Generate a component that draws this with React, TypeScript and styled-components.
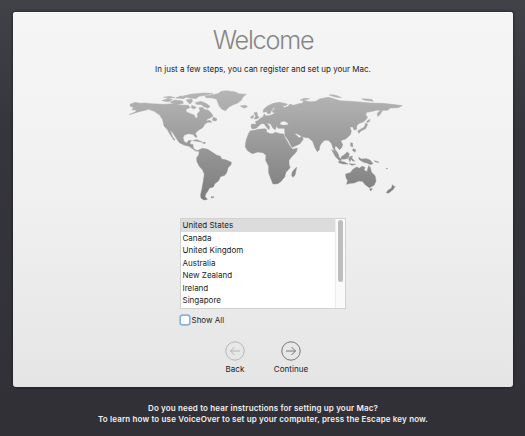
import React from "react";
import styled, { createGlobalStyle } from "styled-components";

const GlobalStyle = createGlobalStyle`
  * { box-sizing: border-box; }
  body { margin: 0; background: #303036; }
`;

const Screen = styled.main`
  width: 525px;
  height: 436px;
  padding: 12px 12px 0 13px;
  overflow: hidden;
  background: linear-gradient(#404247 0%, #35363b 30%, #303036 100%);
  font-family: Inter, "Liberation Sans", sans-serif;
  color: #1c1c1c;
`;

const Panel = styled.section`
  display: flex;
  flex-direction: column;
  align-items: center;
  height: 375px;
  border-radius: 3px;
  background: linear-gradient(#f5f5f5, #f1f1f1 45%, #e5e5e5);
  box-shadow: 0 0 3px #151519, inset 0 1px #ffffff;
`;

const Title = styled.h1`
  margin: 12px 0 0;
  height: 32px;
  font-size: 25.2px;
  line-height: 32px;
  font-weight: 300;
  letter-spacing: -1.2px;
  color: #858585;
`;

const Intro = styled.p`
  margin: 7px 0 0;
  height: 12px;
  font-size: 8px;
  line-height: 12px;
  white-space: nowrap;
`;

const WorldMap = styled.svg`
  display: block;
  flex: none;
  width: 290px;
  height: 125px;
  margin: 5px 0 0 4px;
`;

const Chooser = styled.div`
  width: 166px;
  margin: 13px 1px 0 0;
`;

const CountryList = styled.div`
  display: flex;
  height: 91px;
  border: 1px solid #d2d2d2;
  background: #fff;
`;

const Rows = styled.ul`
  flex: 1;
  margin: 0;
  padding: 0;
  list-style: none;
`;

const Row = styled.li<{ $selected?: boolean }>`
  height: 12.5px;
  padding-left: 2px;
  font-size: 8px;
  line-height: 13px;
  background: ${(p) => (p.$selected ? "#dcdcdc" : "transparent")};
`;

const ScrollTrack = styled.div`
  width: 10px;
  padding: 1px 2px 0;
  border-left: 1px solid #ededed;
  background: #fafafa;
`;

const ScrollThumb = styled.div`
  width: 5px;
  height: 62px;
  border-radius: 3px;
  background: #bdbdbd;
`;

const ShowAll = styled.label`
  display: flex;
  align-items: center;
  gap: 3px;
  height: 12px;
  margin-top: 5px;
  font-size: 8px;
`;

const Box = styled.span`
  width: 8px;
  height: 8px;
  margin-left: 1px;
  border-radius: 1.5px;
  background: #fff;
  box-shadow: 0 0 0 1.7px #86b5df;
`;

const Actions = styled.nav`
  display: flex;
  gap: 16px;
  margin: 15px 0 0;
`;

const Action = styled.button<{ $dim?: boolean }>`
  display: flex;
  flex-direction: column;
  align-items: center;
  width: 40px;
  padding: 0;
  border: 0;
  background: none;
  font: 8.1px/12px Inter, "Liberation Sans", sans-serif;
  color: #1c1c1c;
  svg {
    width: 20px;
    height: 20px;
    margin-bottom: 2px;
    color: ${(p) => (p.$dim ? "#b5b5b5" : "#757575")};
  }
`;

const Hint = styled.footer`
  margin-top: 16px;
  text-align: center;
  font-size: 8px;
  line-height: 11px;
  font-weight: 600;
  letter-spacing: 0.15px;
  color: #f0f0f2;
  white-space: nowrap;
`;

const countries = ["United States", "Canada", "United Kingdom", "Australia", "New Zealand", "Ireland", "Singapore"];

const Arrow = ({ back }: { back?: boolean }) => (
  <svg viewBox="0 0 20 20" fill="none" stroke="currentColor" strokeWidth="1">
    <circle cx="10" cy="10" r="9.2" />
    <path d={back ? "M15 10H5.5M9.5 6L5.5 10L9.5 14" : "M5 10H14.5M10.5 6L14.5 10L10.5 14"} />
  </svg>
);

const lands = [
  // North and Central America
  "M30 73L45 67L60 70L74 69L95 71L130 73L160 71L180 75L205 76L210 83L198 88L199 96L212 101L222 105L227 114L233 113L232 101L240 93L237 83L247 82L255 89L264 90L273 98L279 108L272 113L262 117L258 123L270 121L275 127L263 127L254 133L248 143L235 151L226 160L231 172L226 171L219 163L205 161L193 165L189 174L192 184L200 190L205 182L214 181L209 191L219 194L220 205L230 212L240 209L239 214L227 213L216 205L207 199L192 195L178 188L169 175L157 157L150 151L157 169L165 180L162 181L148 160L143 150L132 138L128 119L119 105L103 94L86 88L70 92L57 95L28 104L47 95L49 90L35 89L42 83L31 79Z",
  // Arctic archipelago
  "M126 62L145 55L157 59L145 65ZM150 66L165 60L188 63L190 70L168 74ZM130 52L150 49L165 53L147 54ZM167 54L181 48L200 51L190 56ZM190 48L215 42L250 39L278 40L257 46L237 49L228 56L205 53ZM198 60L216 56L217 66L209 72ZM226 68L243 64L260 71L270 79L264 85L252 80L244 74L229 73ZM215 76L229 82L222 87L214 83ZM280 111L291 117L288 123L277 121Z",
  // Greenland
  "M255 48L276 44L293 41L304 34L320 32L347 36L356 41L379 43L369 51L364 61L353 69L336 76L324 83L317 92L306 88L298 79L293 67L290 58L278 54L258 53Z",
  // Caribbean
  "M218 182L231 179L246 186L233 184ZM246 188L256 187L255 191Z",
  // South America
  "M239 209L247 205L263 208L277 217L291 226L301 229L305 237L319 240L334 247L333 254L324 263L320 278L314 286L301 290L296 302L284 311L280 321L268 324L263 334L257 342L255 350L262 358L252 360L243 354L242 344L246 326L250 304L253 283L248 270L238 259L231 245L230 233L236 225ZM274 350L282 351L275 354Z",
  // Africa
  "M390 153L404 151L415 148L435 146L440 149L439 156L451 161L459 161L466 157L480 161L491 162L494 171L500 181L509 197L518 208L532 205L529 216L515 230L507 241L507 252L510 263L497 278L494 291L482 305L473 311L459 312L453 297L446 278L446 259L437 241L438 226L429 218L413 216L397 221L383 212L376 201L377 188L380 176L385 163ZM524 267L530 262L525 285L519 292L515 286L517 276Z",
  // Europe and Asia
  "M393 141L395 132L408 133L407 124L414 122L419 116L429 110L433 102L438 107L447 107L459 103L467 96L459 98L457 92L464 87L463 82L455 91L450 101L443 101L440 95L429 97L431 88L444 77L460 70L479 67L502 72L498 77L488 77L493 83L504 79L510 72L520 76L533 72L548 69L550 61L570 65L587 64L600 56L625 52L641 56L660 62L690 64L720 66L750 69L788 70L817 73L847 77L834 83L811 84L802 91L788 91L779 105L773 109L772 100L782 90L768 91L758 94L740 97L737 105L743 112L736 121L728 127L718 130L710 137L710 148L702 150L698 140L690 142L694 154L691 164L677 177L666 180L663 184L668 194L665 203L658 209L652 201L646 198L644 207L651 216L657 227L653 228L643 213L638 201L634 190L625 181L614 181L605 189L599 199L598 209L592 215L585 203L578 184L566 174L550 171L539 166L528 160L523 162L533 169L537 174L546 169L550 177L540 191L517 202L513 197L505 181L495 167L494 152L493 145L474 145L470 137L479 133L488 136L503 135L505 130L493 123L482 126L478 136L469 139L466 149L459 145L452 132L440 128L449 140L447 149L441 143L432 131L423 131L414 140L408 145L397 147ZM520 160L529 162L524 162Z",
  // British Isles and Iceland
  "M402 98L411 97L412 106L417 112L412 116L402 117L407 109ZM394 109L401 106L399 114L392 115ZM361 78L378 76L382 81L371 84Z",
  // Arctic Russia
  "M540 61L552 55L569 56L555 60ZM627 45L640 44L654 48L664 53L646 51ZM725 56L755 58L760 64L735 61Z",
  // Japan
  "M740 124L750 118L749 124L742 128ZM737 129L743 133L737 146L724 152L714 157L714 152L723 147L733 141ZM715 152L722 153L717 160Z",
  // Indonesia, Philippines and New Guinea
  "M635 209L643 214L655 229L665 240L660 243L647 231ZM657 243L673 246L684 252L670 252L656 248ZM664 230L672 225L682 216L688 222L684 235L671 238L663 236ZM689 230L698 228L695 233L704 244L697 242L693 236L690 245L686 238ZM687 251L707 253L696 256ZM716 232L724 237L739 236L750 240L759 251L751 254L741 249L731 247L718 239ZM692 188L698 190L698 201L692 198ZM700 206L708 210L704 217L697 210ZM763 242L777 247L767 246ZM798 265L803 266L800 267Z",
  // Australia and New Zealand
  "M677 282L691 278L699 268L710 261L718 265L726 259L735 262L732 270L741 275L746 257L751 263L754 276L765 287L768 303L762 316L748 323L740 317L734 313L728 304L716 303L702 309L690 310L680 313L683 301L678 293ZM749 326L757 326L752 333ZM817 314L823 321L825 318L820 328L806 339L799 338L804 331L815 324Z",
];

export default function App() {
  return (
    <Screen>
      <GlobalStyle />
      <Panel>
        <Title>Welcome</Title>
        <Intro>In just a few steps, you can register and set up your Mac.</Intro>
        <WorldMap viewBox="0 0 870 375" aria-label="World map">
          <defs>
            <linearGradient id="land" gradientUnits="userSpaceOnUse" x1="0" y1="30" x2="0" y2="360">
              <stop offset="0" stopColor="#b6b6b6" />
              <stop offset="1" stopColor="#7c7c7c" />
            </linearGradient>
          </defs>
          {lands.map((d) => (
            <path key={d} d={d} fill="url(#land)" stroke="url(#land)" strokeWidth="1.5" strokeLinejoin="round" />
          ))}
        </WorldMap>
        <Chooser>
          <CountryList>
            <Rows>
              {countries.map((name, i) => (
                <Row key={name} $selected={i === 0}>{name}</Row>
              ))}
            </Rows>
            <ScrollTrack><ScrollThumb /></ScrollTrack>
          </CountryList>
          <ShowAll><Box />Show All</ShowAll>
        </Chooser>
        <Actions>
          <Action $dim><Arrow back />Back</Action>
          <Action><Arrow />Continue</Action>
        </Actions>
      </Panel>
      <Hint>
        Do you need to hear instructions for setting up your Mac?
        <br />
        To learn how to use VoiceOver to set up your computer, press the Escape key now.
      </Hint>
    </Screen>
  );
}
